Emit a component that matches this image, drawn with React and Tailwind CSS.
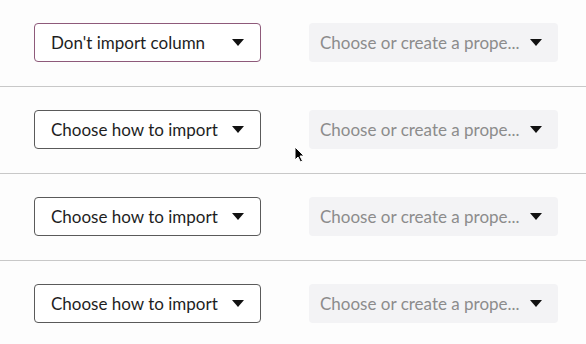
import React from 'react';

const Caret = () => (
  <svg width="12" height="7" viewBox="0 0 12 7" className="shrink-0">
    <path d="M0 0h12L6 7z" fill="#111" />
  </svg>
);

const Row = ({ label, first }) => (
  <div className="h-[87px] border-b border-[#c8c8c8] flex items-center pl-[34px] pb-px">
    <button
      className={
        'w-[227px] h-[39px] rounded-[4px] border bg-white flex items-center justify-between pl-4 pr-4 text-[17px] text-[#1e1e1e] ' +
        (first ? 'border-[#8e5a7a]' : 'border-[#5a5a5a]')
      }
    >
      <span>{label}</span>
      <Caret />
    </button>
    <div className="ml-[48px] w-[249px] h-[39px] rounded-[4px] bg-[#f3f3f5] flex items-center justify-between pl-[11px] pr-4 text-[17px] text-[#8c8c8c]">
      <span>Choose or create a prope...</span>
      <Caret />
    </div>
  </div>
);

export default function App() {
  return (
    <div
      className="relative w-[586px] h-[344px] bg-[#fdfdfd] overflow-hidden"
      style={{ fontFamily: 'Lato, "Open Sans", sans-serif' }}
    >
      <Row label="Don't import column" first />
      <Row label="Choose how to import" />
      <Row label="Choose how to import" />
      <Row label="Choose how to import" />
      <svg className="absolute left-[294px] top-[146px]" width="11" height="17" viewBox="0 0 11 17">
        <path d="M1 1v13l3-3 2.5 5 2-1-2.5-5H10z" fill="#000" stroke="#fff" strokeWidth="1" />
      </svg>
    </div>
  );
}
